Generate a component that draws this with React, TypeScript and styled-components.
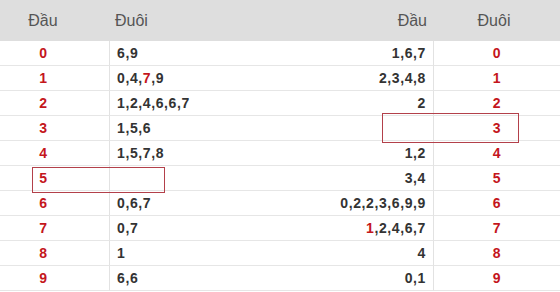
import React from "react";
import styled, { createGlobalStyle } from "styled-components";

const Global = createGlobalStyle`
  html, body { margin: 0; padding: 0; background: #fff; }
  body { font-family: "Liberation Sans", Arial, sans-serif; }
`;

const Page = styled.div`
  display: flex;
  width: 560px;
`;

const Table = styled.div<{ $cols: string; $width: number }>`
  position: relative;
  width: ${(p) => p.$width}px;
  display: grid;
  grid-template-columns: ${(p) => p.$cols};
  grid-auto-rows: 25px;
  grid-template-rows: 41px;
`;

const Head = styled.div<{ $align: string; $pl?: number; $pr?: number }>`
  background: #dedede;
  color: #555;
  font-size: 16px;
  display: flex;
  align-items: center;
  justify-content: ${(p) => p.$align};
  padding-left: ${(p) => p.$pl ?? 0}px;
  padding-right: ${(p) => p.$pr ?? 0}px;
`;

const Cell = styled.div<{ $align: string; $pl?: number; $pr?: number; $red?: boolean; $divider?: boolean }>`
  box-sizing: border-box;
  border-bottom: 1px solid #e6e6e6;
  border-right: ${(p) => (p.$divider ? "1px solid #e2e2e2" : "none")};
  display: flex;
  align-items: center;
  justify-content: ${(p) => p.$align};
  padding-left: ${(p) => p.$pl ?? 0}px;
  padding-right: ${(p) => p.$pr ?? 0}px;
  font-size: 14px;
  font-weight: bold;
  letter-spacing: 0.6px;
  color: ${(p) => (p.$red ? "#c4161c" : "#333")};
`;

const Hot = styled.span`
  color: #c4161c;
`;

const Marker = styled.div<{ $l: number; $t: number; $w: number; $h: number }>`
  position: absolute;
  left: ${(p) => p.$l}px;
  top: ${(p) => p.$t}px;
  width: ${(p) => p.$w}px;
  height: ${(p) => p.$h}px;
  box-sizing: border-box;
  border: 1px solid #b3404a;
  pointer-events: none;
`;

type Val = { text: string; hot?: number };

const renderVal = (v: Val) => {
  if (v.hot === undefined) return v.text;
  const parts = v.text.split(",");
  return parts.map((p, i) => (
    <React.Fragment key={i}>
      {i > 0 && ","}
      {i === v.hot ? <Hot>{p}</Hot> : p}
    </React.Fragment>
  ));
};

const leftData: Val[] = [
  { text: "6,9" },
  { text: "0,4,7,9", hot: 2 },
  { text: "1,2,4,6,6,7" },
  { text: "1,5,6" },
  { text: "1,5,7,8" },
  { text: "" },
  { text: "0,6,7" },
  { text: "0,7" },
  { text: "1" },
  { text: "6,6" },
];

const rightData: Val[] = [
  { text: "1,6,7" },
  { text: "2,3,4,8" },
  { text: "2" },
  { text: "" },
  { text: "1,2" },
  { text: "3,4" },
  { text: "0,2,2,3,6,9,9" },
  { text: "1,2,4,6,7", hot: 0 },
  { text: "4" },
  { text: "0,1" },
];

export default function App() {
  return (
    <>
      <Global />
      <Page>
        <Table $cols="110px 112px" $width={222}>
          <Head $align="center" $pr={24}>Đầu</Head>
          <Head $align="flex-start" $pl={5}>Đuôi</Head>
          {leftData.map((v, i) => (
            <React.Fragment key={i}>
              <Cell $align="center" $pr={22} $red $divider>{i}</Cell>
              <Cell $align="flex-start" $pl={7}>{renderVal(v)}</Cell>
            </React.Fragment>
          ))}
          <Marker $l={32} $t={167} $w={133} $h={26} />
        </Table>
        <Table $cols="212px 126px" $width={338}>
          <Head $align="flex-end" $pr={7}>Đầu</Head>
          <Head $align="center" $pr={6}>Đuôi</Head>
          {rightData.map((v, i) => (
            <React.Fragment key={i}>
              <Cell $align="flex-end" $pr={7} $divider>{renderVal(v)}</Cell>
              <Cell $align="center" $red>{i}</Cell>
            </React.Fragment>
          ))}
          <Marker $l={160} $t={113} $w={137} $h={30} />
        </Table>
      </Page>
    </>
  );
}
